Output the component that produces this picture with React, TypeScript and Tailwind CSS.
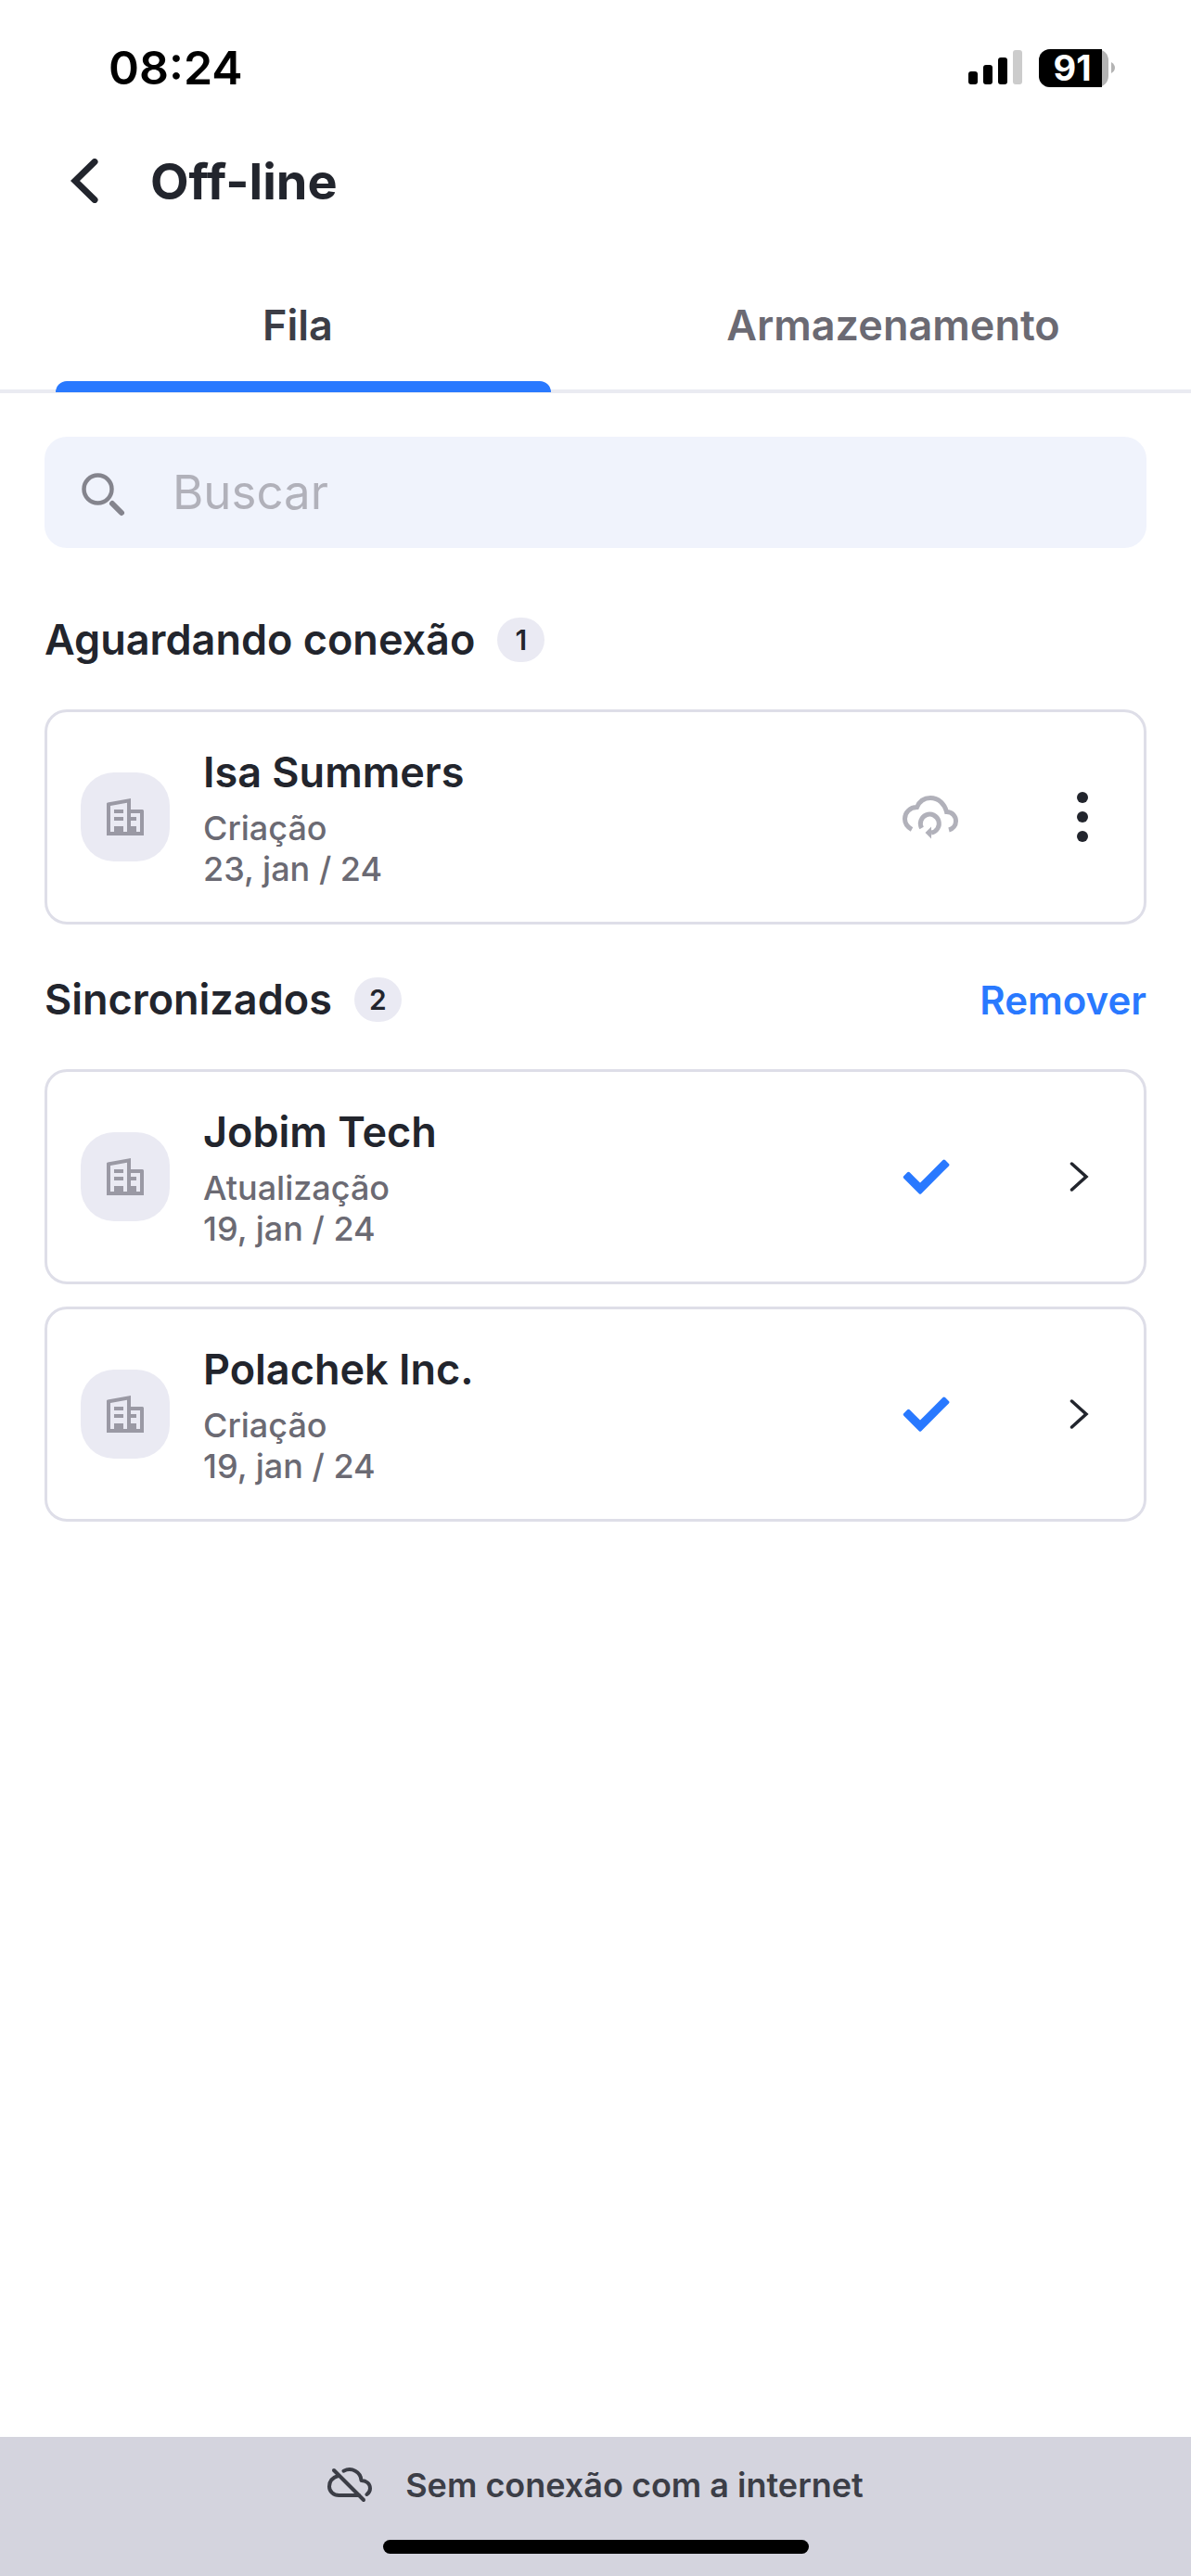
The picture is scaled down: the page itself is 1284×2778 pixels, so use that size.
import { useState } from 'react';

const tabs = ['Fila', 'Armazenamento'];

const pending = [
  { name: 'Isa Summers', action: 'Criação', date: '23, jan / 24' },
];

const synced = [
  { name: 'Jobim Tech', action: 'Atualização', date: '19, jan / 24' },
  { name: 'Polachek Inc.', action: 'Criação', date: '19, jan / 24' },
];

type Item = { name: string; action: string; date: string };

function StatusBar() {
  return (
    <div className="flex items-center justify-between pt-[41px] pl-[117px] pr-[82px]">
      <span className="text-[50px] leading-16 font-semibold text-black">08:24</span>
      <div className="flex items-center gap-[18px]">
        <svg className="w-[58px] h-[38px]" viewBox="0 0 58 38">
          <rect x="0" y="23" width="10" height="14" rx="3" />
          <rect x="16" y="16" width="10" height="21" rx="3" />
          <rect x="32" y="8" width="10" height="29" rx="3" />
          <rect x="48" y="0" width="10" height="37" rx="3" fill="#cccccc" />
        </svg>
        <div className="flex items-center gap-[3px]">
          <div className="w-[75px] rounded-xl bg-[#b3b3b3]">
            <span className="block w-[68px] rounded-l-xl bg-black pl-1 text-center text-[38px] leading-[41px] font-bold text-white">91</span>
          </div>
          <svg className="w-1 h-3" viewBox="0 0 4 12">
            <path d="M0 0C2.500 1.500 4 3.500 4 6S2.500 10.500 0 12Z" fill="#b3b3b3" />
          </svg>
        </div>
      </div>
    </div>
  );
}

function BuildingIcon() {
  return (
    <svg className="w-10 h-10" viewBox="0 0 40 40" fill="#9a99a4">
      <path fillRule="evenodd" d="M0 5.500Q0 4.600 1 4.400L26 0V12H38.500Q40 12 40 13.500V40H0ZM4 8V36H8V30H18V36H22V4.700ZM26 16V20H32V24H26V30H32V36H36V16Z" />
      <path d="M8 12H18V16H8ZM8 20H18V24H8Z" />
    </svg>
  );
}

function PendingIcon() {
  return (
    <svg className="w-15 h-[47px]" viewBox="0 0 60 47" fill="none" stroke="#b1b1ba" strokeWidth="5">
      <path d="M10 36.500C5.500 34 2.500 30 2.500 25C2.500 18 8 12.700 15.500 12.600C18 6.500 23 2.500 30 2.500C39 2.500 45.500 9 47.500 17.500C53.500 17.500 57.500 22 57.500 27.500C57.500 32 54.500 35.800 50 37" />
      <path d="M20.600 35A10 10 0 1 1 31 40" />
      <path d="M31 33.500V46.500L24.500 40Z" fill="#b1b1ba" stroke="none" />
    </svg>
  );
}

function DoneIcon() {
  return (
    <svg className="w-15 h-10" viewBox="3 -3 60 40" fill="#2979ff" stroke="#2979ff" strokeWidth="3.500" strokeLinejoin="round">
      <path d="M9.450 13.550L22 26.100L47.750 .350L51.650 4.250L22 33.900L5.550 17.450Z" />
    </svg>
  );
}

function Badge({ count }: { count: number }) {
  return (
    <span className="flex items-center justify-center w-[51px] h-12 rounded-full bg-[#eaeaf3] text-3xl font-semibold">
      {count}
    </span>
  );
}

function ItemCard({ item, done }: { item: Item; done?: boolean }) {
  return (
    <li className="flex items-center py-[35px] pl-9 pr-[18px] rounded-3xl border-3 border-[#dedee8]">
      <div className="flex items-center justify-center size-24 rounded-[36px] bg-[#eaeaf3] shrink-0">
        <BuildingIcon />
      </div>
      <div className="flex-1 ml-9">
        <h3 className="text-[45px] leading-15 font-semibold">{item.name}</h3>
        <p className="mt-2 text-4xl leading-11 font-medium text-[#6b6a73]">{item.action}</p>
        <p className="text-4xl leading-11 font-medium text-[#6b6a73]">{item.date}</p>
      </div>
      {done ? <DoneIcon /> : <PendingIcon />}
      <button className="flex items-center justify-center size-24 ml-[86px]" aria-label={done ? 'Abrir' : 'Opções'}>
        {done ? (
          <svg className="w-8 h-8" viewBox="0 0 32 32" fill="none" stroke="currentColor" strokeWidth="3.500" strokeLinecap="round">
            <path d="M4.500 2L20 16L4.500 30" />
          </svg>
        ) : (
          <svg className="w-3 h-[54px]" viewBox="0 0 12 54" fill="currentColor">
            <circle cx="6" cy="6" r="6" />
            <circle cx="6" cy="27" r="6" />
            <circle cx="6" cy="48" r="6" />
          </svg>
        )}
      </button>
    </li>
  );
}

export default function App() {
  const [active, setActive] = useState('Fila');

  return (
    <div className="flex flex-col min-h-screen bg-white font-['Inter',sans-serif] text-[#22252d]">
      <StatusBar />

      {/* Header */}
      <header className="flex items-center h-20 mt-[50px] pl-[76px]">
        <button aria-label="Voltar">
          <svg className="w-[30px] h-12" viewBox="0 0 30 48" fill="none" stroke="currentColor" strokeWidth="7">
            <path d="M26 3.500L5 24L26 44.500" strokeLinecap="round" />
          </svg>
        </button>
        <h1 className="ml-14 text-[54px] font-bold">Off-line</h1>
      </header>

      {/* Tabs */}
      <div role="tablist" className="flex mt-19 border-b-4 border-[#eaebf2]">
        {tabs.map((tab) => (
          <button
            key={tab}
            role="tab"
            aria-selected={tab === active}
            onClick={() => setActive(tab)}
            className={
              tab === active
                ? 'flex-1 -mb-[3px] text-[45px] font-semibold text-[#3c3e47]'
                : 'flex-1 -mb-[3px] text-[45px] font-semibold text-[#6b6a73]'
            }
          >
            <span className="block leading-15 pt-2.5 pb-7.5">{tab}</span>
            <span
              className={
                tab === active
                  ? 'block h-3 ml-15 mr-12 rounded-t-xl bg-[#2979ff]'
                  : 'block h-3'
              }
            />
          </button>
        ))}
      </div>

      <main className="flex-1 px-12 pt-[47px]">
        <label className="flex items-center h-30 px-10 rounded-3xl bg-[#f0f3fc]">
          <svg className="size-12 overflow-visible" viewBox="0 0 48 48" fill="none" stroke="#84848d">
            <circle cx="17.500" cy="20.500" r="15" strokeWidth="4.500" />
            <path d="M33 36L43 46" strokeWidth="6" strokeLinecap="round" />
          </svg>
          <input
            type="text"
            aria-label="Buscar"
            placeholder="Buscar"
            className="flex-1 ml-[50px] text-[51px] outline-none placeholder:text-[#b1b1ba]"
          />
        </label>

        <section>
          <div className="flex items-center gap-6 h-12 mt-[75px]">
            <h2 className="text-[45px] font-semibold">Aguardando conexão</h2>
            <Badge count={pending.length} />
          </div>
          <ul className="mt-[51px] space-y-6">
            {pending.map((item) => (
              <ItemCard key={item.name} item={item} />
            ))}
          </ul>
        </section>

        <section>
          <div className="flex items-center gap-6 h-12 mt-[57px]">
            <h2 className="text-[45px] font-semibold">Sincronizados</h2>
            <Badge count={synced.length} />
            <button className="ml-auto text-[42px] font-semibold text-[#2979ff]">Remover</button>
          </div>
          <ul className="mt-[51px] space-y-6">
            {synced.map((item) => (
              <ItemCard key={item.name} item={item} done />
            ))}
          </ul>
        </section>
      </main>

      {/* Connection status */}
      <footer className="flex flex-col items-center pt-7 pb-6 bg-[#d4d4de] text-[#3c3e47]">
        <div className="flex items-center gap-9 h-12">
          <svg className="w-12 h-[38px]" viewBox="0 0 48 38" fill="none" stroke="currentColor" strokeWidth="4" strokeLinecap="round" strokeLinejoin="round">
            <path d="M7 3L39 35" />
            <path d="M11.500 9C5 11 2 15.500 2 20.500C2 26 6.500 30 12.500 30H34" />
            <path d="M17.500 3.700C26 -.500 36 4.500 36.500 14C42 14 46 17.500 46 22.500C46 25.200 44.500 27.500 42.500 29" />
          </svg>
          <p className="text-4xl font-semibold">Sem conexão com a internet</p>
        </div>
        <div className="mt-[35px] w-[459px] h-[15px] rounded-full bg-black" />
      </footer>
    </div>
  );
}
